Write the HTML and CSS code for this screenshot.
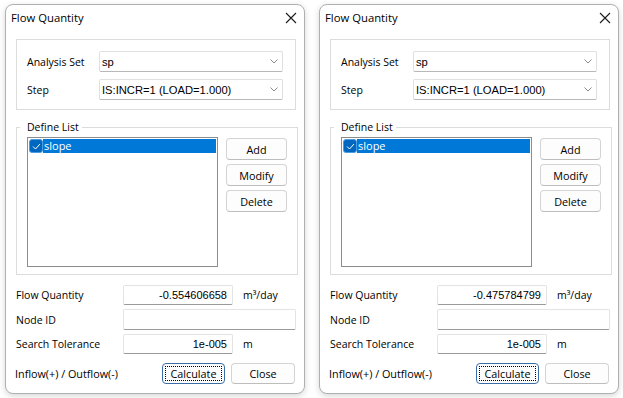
FILE: index.html
```html
<!DOCTYPE html>
<html lang="en">
<head>
  <meta charset="UTF-8">
  <title>Flow Quantity</title>
  <link rel="stylesheet" href="styles.css">
</head>
<body>

  <div class="dialog">
    <div class="titlebar">
      <span class="title">Flow Quantity</span>
      <svg class="close-x" width="12" height="12" viewBox="0 0 12 12"><path d="M1 1 L11 11 M11 1 L1 11" stroke="#1a1a1a" stroke-width="1.1" fill="none"/></svg>
    </div>

    <div class="group">
      <div class="set-row">
        <label>Analysis Set</label>
        <div class="combo"><span>sp</span><svg width="8" height="5" viewBox="0 0 8 5"><path d="M0.5 0.5 L4 4 L7.5 0.5" stroke="#8a8a8a" fill="none"/></svg></div>
      </div>
      <div class="set-row">
        <label>Step</label>
        <div class="combo"><span>IS:INCR=1 (LOAD=1.000)</span><svg width="8" height="5" viewBox="0 0 8 5"><path d="M0.5 0.5 L4 4 L7.5 0.5" stroke="#8a8a8a" fill="none"/></svg></div>
      </div>
    </div>

    <fieldset class="define">
      <legend>Define List</legend>
      <div class="define-body">
        <div class="listbox">
          <div class="item selected">
            <span class="check"><svg width="9" height="7" viewBox="0 0 9 7"><path d="M1 3.5 L3.5 6 L8 1" stroke="#fff" stroke-width="1" fill="none"/></svg></span>
            <span class="item-text">slope</span>
          </div>
        </div>
        <div class="side-buttons">
          <button class="btn">Add</button>
          <button class="btn">Modify</button>
          <button class="btn">Delete</button>
        </div>
      </div>
    </fieldset>

    <div class="result">
      <label>Flow Quantity</label>
      <div class="field value">-0.554606658</div>
      <span class="unit">m³/day</span>
      <label>Node ID</label>
      <div class="field wide"></div>
      <label>Search Tolerance</label>
      <div class="field value">1e-005</div>
      <span class="unit">m</span>
    </div>

    <div class="footer">
      <span class="note">Inflow(+) / Outflow(-)</span>
      <button class="btn default"><span class="focus">Calculate</span></button>
      <button class="btn close">Close</button>
    </div>
  </div>

  <div class="dialog">
    <div class="titlebar">
      <span class="title">Flow Quantity</span>
      <svg class="close-x" width="12" height="12" viewBox="0 0 12 12"><path d="M1 1 L11 11 M11 1 L1 11" stroke="#1a1a1a" stroke-width="1.1" fill="none"/></svg>
    </div>

    <div class="group">
      <div class="set-row">
        <label>Analysis Set</label>
        <div class="combo"><span>sp</span><svg width="8" height="5" viewBox="0 0 8 5"><path d="M0.5 0.5 L4 4 L7.5 0.5" stroke="#8a8a8a" fill="none"/></svg></div>
      </div>
      <div class="set-row">
        <label>Step</label>
        <div class="combo"><span>IS:INCR=1 (LOAD=1.000)</span><svg width="8" height="5" viewBox="0 0 8 5"><path d="M0.5 0.5 L4 4 L7.5 0.5" stroke="#8a8a8a" fill="none"/></svg></div>
      </div>
    </div>

    <fieldset class="define">
      <legend>Define List</legend>
      <div class="define-body">
        <div class="listbox">
          <div class="item selected">
            <span class="check"><svg width="9" height="7" viewBox="0 0 9 7"><path d="M1 3.5 L3.5 6 L8 1" stroke="#fff" stroke-width="1" fill="none"/></svg></span>
            <span class="item-text">slope</span>
          </div>
        </div>
        <div class="side-buttons">
          <button class="btn">Add</button>
          <button class="btn">Modify</button>
          <button class="btn">Delete</button>
        </div>
      </div>
    </fieldset>

    <div class="result">
      <label>Flow Quantity</label>
      <div class="field value">-0.475784799</div>
      <span class="unit">m³/day</span>
      <label>Node ID</label>
      <div class="field wide"></div>
      <label>Search Tolerance</label>
      <div class="field value">1e-005</div>
      <span class="unit">m</span>
    </div>

    <div class="footer">
      <span class="note">Inflow(+) / Outflow(-)</span>
      <button class="btn default"><span class="focus">Calculate</span></button>
      <button class="btn close">Close</button>
    </div>
  </div>

</body>
</html>
```

FILE: styles.css
```css
* {
  margin: 0;
  padding: 0;
  box-sizing: border-box;
}
body {
  font-family: 'Open Sans', sans-serif;
  font-size: 10.5px;
  color: #000;
  background-color: #fff;
  display: flex;
  gap: 14px;
  padding: 4px 0 0 5px;
  height: 398px;
  overflow: hidden;
}
.dialog {
  width: 300px;
  height: 390px;
  background-color: #fff;
  border: 1px solid #b0b0b0;
  border-radius: 8px;
  box-shadow: 0 2px 6px rgba(0, 0, 0, 0.16);
  padding: 0 8px 0 10px;
  display: flex;
  flex-direction: column;
}
.titlebar {
  height: 25px;
  margin-bottom: 9px;
  margin-left: -5px;
  display: flex;
  align-items: center;
  justify-content: space-between;
}
.title {
  font-size: 11.3px;
}
.close-x {
  margin-right: -1px;
}
.group {
  height: 71px;
  border: 1px solid #dcdcdc;
  padding: 11px 12px 0 10px;
  display: flex;
  flex-direction: column;
  gap: 7px;
}
.set-row {
  display: flex;
  align-items: center;
}
.set-row label {
  width: 72px;
}
.combo {
  flex: 1;
  height: 21px;
  border: 1px solid #e0e0e0;
  border-bottom-color: #b8b8b8;
  border-radius: 2px;
  background-color: #fff;
  display: flex;
  align-items: center;
  justify-content: space-between;
  padding: 0 4px 0 2px;
  font-family: 'Liberation Sans', sans-serif;
  font-size: 11.2px;
}
.define {
  margin-top: 10px;
  border: 1px solid #dcdcdc;
  padding: 3px 10px 7px 10px;
}
.define legend {
  margin-left: -7px;
  padding: 0 3px 0 7px;
  line-height: 14px;
}
.define-body {
  display: flex;
  gap: 8px;
}
.listbox {
  width: 191px;
  height: 130px;
  border: 1px solid #8c8c8c;
  padding: 1px;
  background-color: #fff;
}
.item {
  height: 14px;
  display: flex;
  align-items: center;
}
.item.selected .item-text {
  flex: 1;
  background-color: #0078d7;
  color: #fff;
  height: 14px;
  line-height: 14px;
  padding-left: 1px;
  font-size: 11px;
}
.check {
  width: 14px;
  height: 14px;
  background-color: #0067c0;
  border: 1px solid #4a9be0;
  border-radius: 3px;
  display: flex;
  align-items: center;
  justify-content: center;
}
.side-buttons {
  display: flex;
  flex-direction: column;
  gap: 4px;
  padding-top: 1px;
}
.btn {
  width: 61px;
  height: 22px;
  background-color: #fdfdfd;
  border: 1px solid #d4d4d4;
  border-bottom-color: #bdbdbd;
  border-radius: 4px;
  font-family: 'Open Sans', sans-serif;
  font-size: 10.8px;
  color: #000;
}
.result {
  margin-top: 10px;
  display: grid;
  grid-template-columns: 107px 110px 1fr;
  grid-template-rows: 20px 21px 20px;
  row-gap: 4px;
  align-items: center;
}
.field {
  height: 100%;
  border: 1px solid #e3e3e3;
  border-bottom-color: #9a9a9a;
  border-radius: 2px;
  background-color: #fff;
  font-family: 'Liberation Sans', sans-serif;
  font-size: 11px;
  display: flex;
  align-items: center;
  justify-content: flex-end;
  padding-right: 5px;
}
.field.wide {
  grid-column: 2 / 4;
}
.unit {
  padding-left: 10px;
}
.footer {
  margin-top: 9px;
  margin-right: 1px;
  display: flex;
  align-items: center;
  gap: 6px;
}
.note {
  margin-left: -1px;
  margin-right: auto;
  font-size: 10.8px;
}
.btn.default {
  width: 63px;
  height: 21px;
  border: 1px solid #3a6ea5;
  padding: 2px;
}
.btn.default .focus {
  display: block;
  height: 100%;
  border: 1px dotted #000;
  line-height: 13px;
}
.btn.close {
  width: 64px;
  height: 21px;
}
```
